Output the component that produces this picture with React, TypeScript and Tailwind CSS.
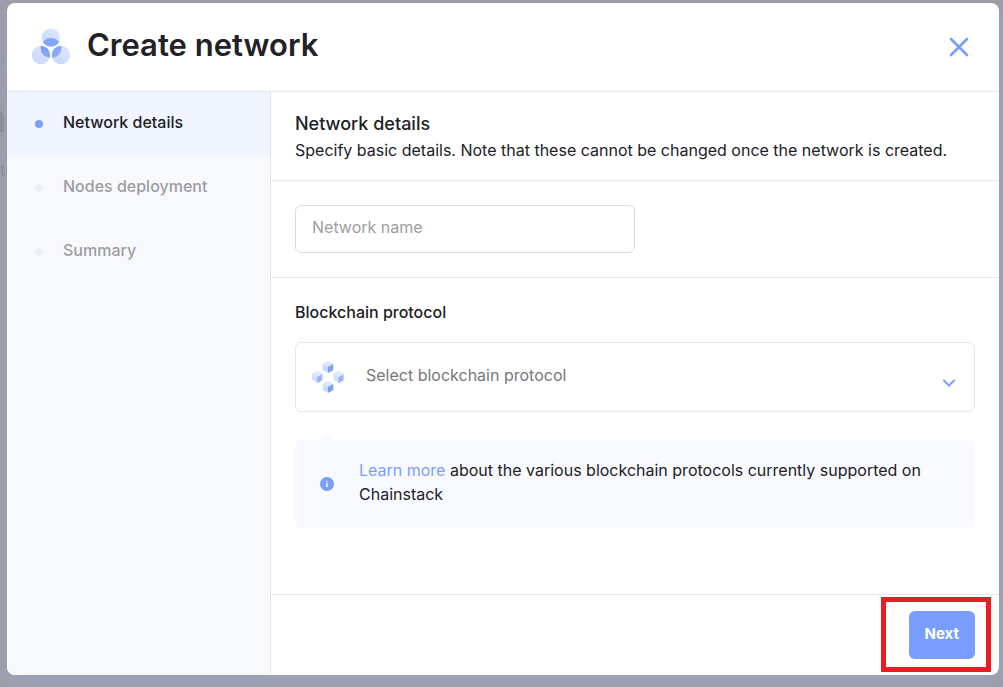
import { useState } from "react";

const steps = ["Network details", "Nodes deployment", "Summary"];

function NetworkLogo() {
  return (
    <svg viewBox="0 0 40 40" className="size-10 shrink-0" aria-hidden="true">
      <defs>
        <linearGradient id="circle" x1="1" y1="0" x2="0" y2="1">
          <stop offset="0" stopColor="#e2eafe" />
          <stop offset="1" stopColor="#c4d4fd" />
        </linearGradient>
        <linearGradient id="petal" x1="0" y1="0" x2="1" y2="1">
          <stop offset="0" stopColor="#7396f5" />
          <stop offset="1" stopColor="#90b0ff" />
        </linearGradient>
        <clipPath id="top">
          <circle cx="20" cy="10.6" r="9.2" />
        </clipPath>
        <clipPath id="left">
          <circle cx="10" cy="28" r="9.2" />
        </clipPath>
        <clipPath id="right">
          <circle cx="30" cy="28" r="9.2" />
        </clipPath>
      </defs>
      <circle cx="20" cy="10.6" r="9.2" fill="url(#circle)" />
      <circle cx="10" cy="28" r="9.2" fill="url(#circle)" />
      <circle cx="30" cy="28" r="9.2" fill="url(#circle)" />
      <ellipse cx="20" cy="21" rx="10.4" ry="10" fill="#82a4fb" clipPath="url(#top)" />
      <circle cx="19.6" cy="21" r="10" fill="url(#petal)" clipPath="url(#left)" />
      <circle cx="20.4" cy="21" r="10" fill="url(#petal)" clipPath="url(#right)" />
      <path d="M20 19.5V40" stroke="#fff" strokeWidth="1" />
    </svg>
  );
}

function Cube({ x, y }: { x: number; y: number }) {
  return (
    <g transform={`translate(${x} ${y})`}>
      <path d="M0-6 5.2-3V3L0 6-5.2 3V-3Z" fill="#cbd9fe" />
      <path d="M0-6 5.2-3 0 0-5.2-3Z" fill="#dfe8ff" />
      <path d="M0 0 5.2-3V3L0 6Z" fill="#7d9ffa" />
    </g>
  );
}

function SoftCube({ x, y }: { x: number; y: number }) {
  return (
    <g transform={`translate(${x} ${y})`}>
      <path d="M0-6 5.2-3V3L0 6-5.2 3V-3Z" fill="#d3dffe" />
      <path d="M0-1 0 6 5.2 3V-3Z" fill="#c0d1fe" />
      <path d="M0-6 5.2-3 0 0-5.2-3Z" fill="#e0e9ff" />
      <path d="M0 0 4-2.2V3.6L0 6Z" fill="#96b2fc" />
    </g>
  );
}

function ProtocolIcon() {
  return (
    <svg viewBox="0 0 32 32" className="size-8 shrink-0" aria-hidden="true">
      <Cube x={16} y={6} />
      <SoftCube x={5.3} y={16} />
      <SoftCube x={26.7} y={16} />
      <Cube x={16} y={26} />
    </svg>
  );
}

export default function App() {
  const [name, setName] = useState("");
  const [protocol, setProtocol] = useState("");

  return (
    <div className="relative flex min-h-screen flex-col overflow-hidden bg-[#9e9da9] pt-[3px] pr-1 pb-3 pl-[7px] font-[Inter,'Liberation_Sans',sans-serif] text-base text-[#212126]">
      <div className="absolute inset-y-0 left-0 w-[7px] overflow-hidden" aria-hidden="true">
        <span className="absolute top-[50px] left-0 text-base text-[#8f96b4]">ro</span>
        <span className="absolute top-[94px] right-0 text-[40px] leading-12 font-semibold text-[#8e8d97]">n</span>
        <span className="absolute top-[158px] left-0 text-base text-[#88878f]">ti</span>
      </div>

      <div
        role="dialog"
        aria-labelledby="dialog-title"
        className="relative flex grow flex-col overflow-hidden rounded-lg bg-white shadow-[0_6px_10px_#9aa2bc]"
      >
        <header className="flex h-[89px] items-center border-b border-[#e6e6ea] pr-[30px] pl-6">
          <NetworkLogo />
          <h1 id="dialog-title" className="ml-4 grow pb-1 text-[31px] leading-10 font-semibold">
            Create network
          </h1>
          <button type="button" aria-label="Close" className="text-[#7a9eff]">
            <svg viewBox="0 0 20 20" className="size-5" fill="none" stroke="currentColor" strokeWidth="2.6" strokeLinecap="round">
              <path d="M2 2 18 18M18 2 2 18" />
            </svg>
          </button>
        </header>

        <div className="flex grow">
          <nav className="w-66 shrink-0 border-r border-[#e6e6ea] bg-[#f8f9fc]" aria-label="Steps">
            <ol>
              {steps.map((step, i) => (
                <li
                  key={step}
                  aria-current={i === 0 ? "step" : undefined}
                  className={
                    i === 0
                      ? "flex h-16 items-center gap-5 bg-[#f0f5ff] pl-7 font-medium"
                      : "flex h-16 items-center gap-5 pl-7 font-medium text-[#9d9da1]"
                  }
                >
                  <span className={i === 0 ? "size-2 rounded-full bg-[#7a9eff]" : "size-2 rounded-full bg-[#e9effe]"} />
                  <span className="pb-1">{step}</span>
                </li>
              ))}
            </ol>
          </nav>

          <main className="flex min-w-0 grow flex-col">
            <section className="border-b border-[#e6e6ea] px-6 py-[18px]">
              <h2 className="text-lg leading-7 font-medium">Network details</h2>
              <p className="leading-6">
                Specify basic details. Note that these cannot be changed once the network is created.
              </p>
            </section>

            <section className="border-b border-[#e6e6ea] p-6">
              <input
                type="text"
                aria-label="Network name"
                placeholder="Network name"
                value={name}
                onChange={(e) => setName(e.target.value)}
                className="block h-12 w-full max-w-[340px] rounded-md border border-[#dcdce0] px-4 pb-1 placeholder:text-[#9d9da1]"
              />
            </section>

            <section className="grow px-6 pt-[22px] pb-6">
              <label htmlFor="protocol" className="block leading-6 font-medium">
                Blockchain protocol
              </label>
              <div className="mt-[18px] grid items-center">
                <select
                  id="protocol"
                  value={protocol}
                  onChange={(e) => setProtocol(e.target.value)}
                  className="col-start-1 row-start-1 h-[70px] w-full appearance-none rounded-md border border-[#e6e6ea] bg-white pb-1 pl-[70px] text-[#77777c]"
                >
                  <option value="">Select blockchain protocol</option>
                </select>
                <div className="pointer-events-none col-start-1 row-start-1 flex items-center justify-between pr-5 pl-[17px]">
                  <ProtocolIcon />
                  <svg viewBox="0 0 12 8" className="mt-3 h-2 w-3" fill="none" stroke="#7a9eff" strokeWidth="2" strokeLinecap="round" aria-hidden="true">
                    <path d="M1 1.5 6 6.5 11 1.5" />
                  </svg>
                </div>
              </div>

              <div className="mt-5">
                <svg viewBox="0 0 16 8" className="ml-6 h-2 w-4" aria-hidden="true">
                  <path d="M0 8 8 0 16 8Z" fill="#f8faff" />
                </svg>
                <div className="flex items-center gap-[25px] rounded-md bg-[#f8faff] px-[25px] pt-[18px] pb-[22px]">
                  <svg viewBox="0 0 14 14" className="mt-1 size-3.5 shrink-0" aria-hidden="true">
                    <circle cx="7" cy="7" r="7" fill="#7a9eff" />
                    <path d="M6.2 3.9H7.6V5H6.2ZM5.8 6H7.6V9.2H8.2V10H5.7V9.2H6.3V6.8H5.8Z" fill="#fff" />
                  </svg>
                  <p className="leading-6">
                    <a href="#protocols" className="text-[#7a9eff]">Learn more</a> about the various blockchain
                    protocols currently supported on Chainstack
                  </p>
                </div>
              </div>
            </section>

            <footer className="flex h-[81px] items-center justify-end border-t border-[#e6e6ea] px-6">
              <div className="relative">
                <button type="button" className="h-12 rounded-md bg-[#7a9eff] px-4 pb-0.5 text-[15px] font-bold text-white">
                  Next
                </button>
                <span className="pointer-events-none absolute -top-3.5 -right-4 -bottom-[13px] -left-7 border-5 border-[#ed1c24]" />
              </div>
            </footer>
          </main>
        </div>
      </div>
    </div>
  );
}
